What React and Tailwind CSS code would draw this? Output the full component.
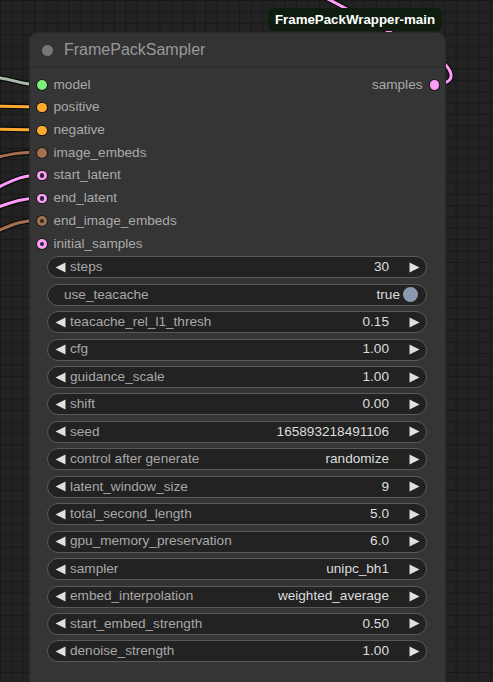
import React from "react";

const inputs = [
  { name: "model", color: "#7cf07c" },
  { name: "positive", color: "#ffa931" },
  { name: "negative", color: "#ffa931" },
  { name: "image_embeds", color: "#a5704f" },
  { name: "start_latent", color: "#ff9cf9", ring: true },
  { name: "end_latent", color: "#ff9cf9", ring: true },
  { name: "end_image_embeds", color: "#a5704f", ring: true },
  { name: "initial_samples", color: "#ff9cf9", ring: true },
];

const widgets = [
  { label: "steps", value: "30" },
  { label: "use_teacache", value: "true", toggle: true },
  { label: "teacache_rel_l1_thresh", value: "0.15" },
  { label: "cfg", value: "1.00" },
  { label: "guidance_scale", value: "1.00" },
  { label: "shift", value: "0.00" },
  { label: "seed", value: "165893218491106" },
  { label: "control after generate", value: "randomize" },
  { label: "latent_window_size", value: "9" },
  { label: "total_second_length", value: "5.0" },
  { label: "gpu_memory_preservation", value: "6.0" },
  { label: "sampler", value: "unipc_bh1" },
  { label: "embed_interpolation", value: "weighted_average" },
  { label: "start_embed_strength", value: "0.50" },
  { label: "denoise_strength", value: "1.00" },
];

const wires = [
  { d: "M-10 77 C 12 78, 20 85, 41 85", color: "#a9bca9" },
  { d: "M-10 106 L 41 107", color: "#ffa931" },
  { d: "M-10 129 L 41 130", color: "#ffa931" },
  { d: "M-10 159 C 10 154, 20 152, 41 152", color: "#a5704f" },
  { d: "M-10 191 C 10 182, 20 175, 41 175", color: "#ff9cf9" },
  { d: "M-10 210 C 10 203, 20 198, 41 198", color: "#ff9cf9" },
  { d: "M-10 234 C 10 226, 20 220, 41 220", color: "#a5704f" },
  { d: "M436 84 C 462 84, 455 62, 410 42 C 380 28, 350 10, 322 -4", color: "#ff9cf9" },
];

const Slot = ({ color, ring }) => (
  <span
    className="relative block w-[9.5px] h-[9.5px] rounded-full shrink-0 shadow-[0_0_0_1px_#1a1a1a]"
    style={{ background: color }}
  >
    {ring && <span className="absolute inset-[2.5px] rounded-full bg-[#2a2a2a]" />}
  </span>
);

const Arrow = ({ dir }) => (
  <svg width="11" height="11" viewBox="0 0 11 11" className="shrink-0">
    {dir === "left" ? <polygon points="10.5,0.5 10.5,10.5 0.5,5.5" fill="#e0e0e0" /> : <polygon points="0.5,0.5 0.5,10.5 10.5,5.5" fill="#e0e0e0" />}
  </svg>
);

const Widget = ({ label, value, toggle }) => (
  <div className="flex items-center h-[22px] mx-[17px] mr-[18px] rounded-full border border-[#595959] bg-[#222222] text-[13.6px]">
    {toggle ? (
      <>
        <span className="ml-[16px] text-[#a8a8a8]">{label}</span>
        <span className="ml-auto text-[#dddddd]">{value}</span>
        <span className="ml-[3px] mr-[8px] w-[15px] h-[15px] rounded-full bg-[#8a9bb0]" />
      </>
    ) : (
      <>
        <span className="ml-[7px]"><Arrow dir="left" /></span>
        <span className="ml-[4px] text-[#a8a8a8]">{label}</span>
        <span className="ml-auto text-[#dddddd]">{value}</span>
        <span className="ml-[20px] mr-[6px]"><Arrow dir="right" /></span>
      </>
    )}
  </div>
);

export default function App() {
  return (
    <div
      className="relative w-[493px] h-[682px] overflow-hidden bg-[#222222] bg-[linear-gradient(to_right,#181818_1px,transparent_1px),linear-gradient(to_bottom,#181818_1px,transparent_1px)] bg-[size:11.4px_11.4px]"
      style={{ fontFamily: '"Liberation Sans", Arial, sans-serif' }}
    >
      <svg className="absolute inset-0" width="493" height="682">
        {wires.map((w, i) => (
          <g key={i} fill="none">
            <path d={w.d} stroke="#0b0b0b" strokeWidth="5.5" />
            <path d={w.d} stroke={w.color} strokeWidth="3" />
          </g>
        ))}
      </svg>

      {/* node */}
      <div className="absolute left-[30px] top-[33px] w-[415px] h-[700px] rounded-[8px] bg-[#353535] shadow-[0_0_0_1px_#2a2a2a]">
        <div className="flex items-center h-[35px] border-b border-[#2b2b2b] rounded-t-[8px] bg-[#333333]">
          <span className="ml-[11.5px] w-[11px] h-[11px] rounded-full bg-[#777777]" />
          <span className="ml-[11.5px] text-[16px] text-[#999999]">FramePackSampler</span>
        </div>

        <div className="pt-[5.6px]">
          {inputs.map((s, i) => (
            <div key={s.name} className="flex items-center h-[22.7px]">
              <span className="ml-[7px]"><Slot color={s.color} ring={s.ring} /></span>
              <span className="ml-[7px] text-[13.6px] text-[#aaaaaa]">{s.name}</span>
              {i === 0 && (
                <>
                  <span className="ml-auto text-[13.6px] text-[#aaaaaa]">samples</span>
                  <span className="ml-[7px] mr-[6px]"><Slot color="#ff9cf9" /></span>
                </>
              )}
            </div>
          ))}
        </div>

        <div className="mt-[1.2px] flex flex-col gap-[5.45px]">
          {widgets.map((w) => (
            <Widget key={w.label} {...w} />
          ))}
        </div>
      </div>

      {/* badge */}
      <div className="absolute left-[268px] top-[8px] w-[174px] h-[23px] rounded-[6px] bg-[#0f1d0f] flex items-center justify-center text-white font-bold text-[13.3px]">
        FramePackWrapper-main
      </div>
    </div>
  );
}
